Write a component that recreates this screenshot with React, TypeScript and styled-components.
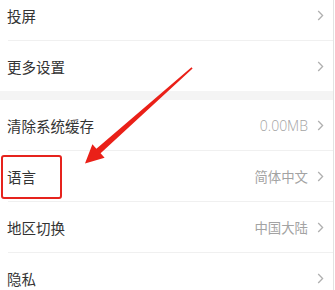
import React from "react";
import styled, { createGlobalStyle } from "styled-components";

const Global = createGlobalStyle`
  html, body { margin: 0; padding: 0; background: #fff; }
  body { font-family: "Noto Sans CJK SC", "Noto Sans", sans-serif; overflow: hidden; }
`;

const Page = styled.div`
  position: relative;
  width: 333px;
  height: 290px;
  overflow: hidden;
  border-right: 1px solid #e2e2e2;
  background: #fff;
`;

const List = styled.div`
  display: flex;
  flex-direction: column;
  margin-top: -10px;
`;

const Group = styled.div`
  display: flex;
  flex-direction: column;
`;

const GroupGap = styled.div`
  height: 9px;
  background: #f4f4f4;
`;

const Row = styled.div<{ $divider?: boolean }>`
  height: 50px;
  display: flex;
  align-items: center;
  padding: 0 9px 0 7px;
  box-sizing: border-box;
  position: relative;
  ${(p) =>
    p.$divider
      ? `&::after { content: ""; position: absolute; left: 8px; right: 0; bottom: -1px; height: 1px; background: #f0f0f0; }
         margin-bottom: 1px;`
      : ""}
`;

const Label = styled.span`
  flex: 1;
  font-size: 14.5px;
  color: #333;
`;

const Value = styled.span<{ $latin?: boolean }>`
  font-family: ${(p) =>
    p.$latin ? `"Open Sans", "Noto Sans CJK SC", sans-serif` : `"Noto Sans CJK SC", sans-serif`};
  font-size: ${(p) => (p.$latin ? "14px" : "13.4px")};
  font-weight: ${(p) => (p.$latin ? 300 : 400)};
  color: #a3a3a3;
  margin-right: 9px;
`;

const Chevron = styled.svg`
  width: 7px;
  height: 11px;
  flex: none;
`;

const Highlight = styled.div`
  position: absolute;
  left: 1px;
  top: 155px;
  width: 57px;
  height: 40px;
  border: 2.6px solid #e6231d;
  border-radius: 3px;
`;

const ArrowSvg = styled.svg`
  position: absolute;
  left: 0;
  top: 0;
  width: 333px;
  height: 290px;
  pointer-events: none;
`;

const Arrow = () => (
  <Chevron viewBox="0 0 7 11">
    <path d="M1.2 1 L5.6 5.5 L1.2 10" fill="none" stroke="#b0b0b0" strokeWidth="1.3" />
  </Chevron>
);

type Item = { label: string; value?: string; latin?: boolean };

const groups: Item[][] = [
  [{ label: "投屏" }, { label: "更多设置" }],
  [
    { label: "清除系统缓存", value: "0.00MB", latin: true },
    { label: "语言", value: "简体中文" },
    { label: "地区切换", value: "中国大陆" },
    { label: "隐私" },
  ],
];

export default function App() {
  return (
    <>
      <Global />
      <Page>
        <List>
          {groups.map((g, gi) => (
            <React.Fragment key={gi}>
              {gi > 0 && <GroupGap />}
              <Group>
                {g.map((it, i) => (
                  <Row key={it.label} $divider={i < g.length - 1}>
                    <Label>{it.label}</Label>
                    {it.value && <Value $latin={it.latin}>{it.value}</Value>}
                    <Arrow />
                  </Row>
                ))}
              </Group>
            </React.Fragment>
          ))}
        </List>
        <Highlight />
        <ArrowSvg viewBox="0 0 333 290">
          <polygon
            points="191.5,67.3 192.6,68.6 100.6,153.3 104.6,157.8 85,163.5 92.4,144.2 96.4,148.7"
            fill="#ea2018"
          />
        </ArrowSvg>
      </Page>
    </>
  );
}
